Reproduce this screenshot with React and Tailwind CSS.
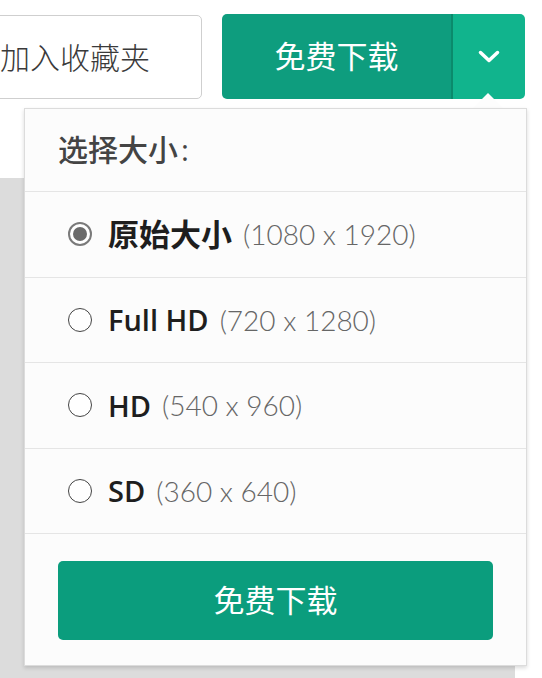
import React from "react";

const rows = [
  { label: "原始大小", dims: "(1080 x 1920)", selected: true },
  { label: "Full HD", dims: "(720 x 1280)" },
  { label: "HD", dims: "(540 x 960)" },
  { label: "SD", dims: "(360 x 640)" },
];

const font = { fontFamily: '"Open Sans", "Noto Sans CJK SC", sans-serif' };

function Radio({ selected }) {
  if (selected) {
    return (
      <span className="flex h-[24px] w-[24px] shrink-0 items-center justify-center rounded-full border-[2px] border-[#7a7a7a] bg-white">
        <span className="h-[14px] w-[14px] rounded-full bg-[#6b6b6b]" />
      </span>
    );
  }
  return <span className="h-[24px] w-[24px] shrink-0 rounded-full border-[1.5px] border-[#444] bg-white" />;
}

export default function App() {
  return (
    <div className="relative h-[678px] w-[542px] overflow-hidden bg-white" style={font}>
      <div className="flex h-[178px] items-start">
        <button className="ml-[-52px] mt-[15px] flex h-[84px] w-[254px] items-center justify-center rounded-[5px] border border-[#cfcfcf] bg-white text-[30px] font-light text-[#3a3a3a]">
          加入收藏夹
        </button>
        <div className="ml-[20px] mt-[14px] flex h-[85px] w-[303px] overflow-hidden rounded-[5px]">
          <div className="flex w-[229px] items-center justify-center bg-[#0e9d7e] text-[31px] text-white">
            免费下载
          </div>
          <div className="w-[2px] bg-[#0b8a6c]" />
          <div className="flex flex-1 items-center justify-center bg-[#11b48d]">
            <svg width="24" height="15" viewBox="0 0 24 15" fill="none">
              <path d="M3.5 3.5 L12 11.5 L20.5 3.5" stroke="white" strokeWidth="3.5" strokeLinecap="round" strokeLinejoin="round" />
            </svg>
          </div>
        </div>
      </div>
      <div className="h-[500px] w-[515px] bg-[#dcdcdc]" />

      <div className="absolute left-[473px] top-[93px] h-0 w-0 border-b-[15px] border-l-[15px] border-r-[15px] border-b-[#fdfdfd] border-l-transparent border-r-transparent" />

      <div className="absolute left-[24px] top-[108px] flex h-[558px] w-[503px] flex-col border border-[#dcdcdc] bg-[#fcfcfc] shadow-[0_2px_4px_rgba(0,0,0,0.15)]">
        <div className="flex h-[82px] items-center pl-[33px] pb-[2px] text-[30px] font-medium text-[#444]">
          选择大小<span className="ml-[3px]">:</span>
        </div>
        {rows.map((r) => (
          <div key={r.label} className="flex h-[85.5px] items-center border-t border-[#e5e5e5] pl-[43px]">
            <Radio selected={r.selected} />
            <span className={"ml-[16px] text-[#1e1e1e] " + (r.selected ? "text-[31px] font-bold" : "text-[29px] font-semibold")}>
              {r.label}
            </span>
            <span className="ml-[11px] font-['Lato',sans-serif] text-[28px] font-light text-[#666]">{r.dims}</span>
          </div>
        ))}
        <div className="flex flex-1 flex-col border-t border-[#e5e5e5] px-[33px] pt-[27px]">
          <button className="flex h-[79px] w-full items-center justify-center rounded-[5px] bg-[#0b9d7d] text-[31px] text-white">
            免费下载
          </button>
        </div>
      </div>
    </div>
  );
}
